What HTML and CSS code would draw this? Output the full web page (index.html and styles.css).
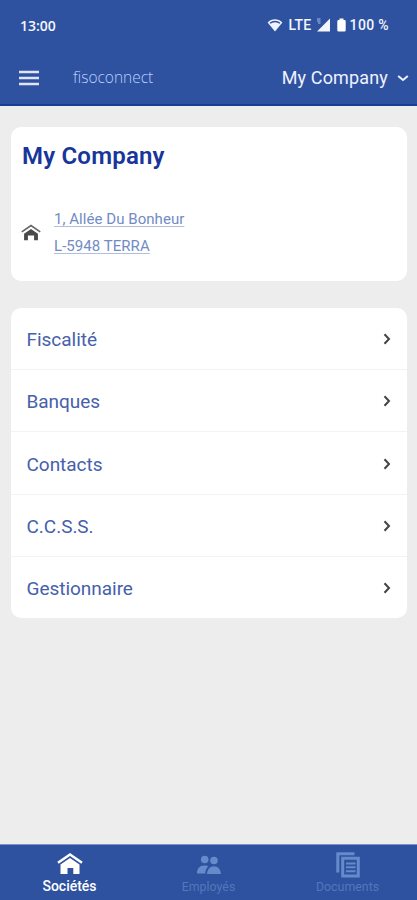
FILE: index.html
```html
<!DOCTYPE html>
<html lang="fr">
<head>
<meta charset="utf-8">
<meta name="viewport" content="width=device-width, initial-scale=1">
<title>fisoconnect</title>
<link rel="stylesheet" href="styles.css">
</head>
<body>
<div class="app">
  <header class="header">
    <div class="status">
      <span class="clock">13:00</span>
      <span class="status-right">
        <svg class="wifi" width="16" height="14" viewBox="0 0 16 14"><path d="M8 13.400 0.600 4.600C4.800 0.200 11.200 0.200 15.400 4.600Z" fill="#eef1ff"/><path d="M3 5.300C5.800 2.900 10.200 2.900 13 5.300" fill="none" stroke="#2e529f" stroke-width="1.300"/></svg>
        <span class="lte">LTE</span>
        <svg class="signal" width="15" height="14" viewBox="0 0 15 14"><path d="M14 0.500V13.500H1Z" fill="#f4f5ff"/><path d="M1 1H4.500M1 3H4.500M2 5H4.500" stroke="#a9b9e5" stroke-width="1.200"/></svg>
        <svg class="battery" width="9" height="14" viewBox="0 0 9 14"><path d="M2.500 0.500H6.500V2H7.500Q8.700 2 8.700 3.200V12.300Q8.700 13.500 7.500 13.500H1.500Q0.300 13.500 0.300 12.300V3.200Q0.300 2 1.500 2H2.500Z" fill="#fff"/></svg>
        <span class="percent">100 %</span>
      </span>
    </div>
    <div class="toolbar">
      <svg class="menu" width="20" height="16" viewBox="0 0 20 16"><path d="M0 2H20M0 8H20M0 14H20" stroke="#dfe4fb" stroke-width="2.600"/></svg>
      <span class="brand">fisoconnect</span>
      <span class="company">My Company</span>
      <svg class="down" width="12" height="8" viewBox="0 0 12 8"><path d="M1.200 2 6 6 10.800 2" fill="none" stroke="#eef1ff" stroke-width="2"/></svg>
    </div>
  </header>
  <main class="content">
    <section class="card">
      <h1 class="title">My Company</h1>
      <div class="address">
        <svg class="home" width="20" height="17" viewBox="0 0 26 21"><path d="M1 9.700 13 1.500 25 9.700" fill="none" stroke="#666" stroke-width="2.200"/><path d="M4 12 13 6 22 12V20.500H17V14.500H9V20.500H4Z" fill="#4a4a4a"/></svg>
        <div class="lines"><a class="line">1, Allée Du Bonheur</a><a class="line">L-5948 TERRA</a></div>
      </div>
    </section>
    <nav class="list">
      <div class="row"><span>Fiscalité</span><svg class="chev" width="8" height="12" viewBox="0 0 8 12"><path d="M1.500 1.200 6 6 1.500 10.800" fill="none" stroke="#444" stroke-width="2"/></svg></div>
      <div class="row"><span>Banques</span><svg class="chev" width="8" height="12" viewBox="0 0 8 12"><path d="M1.500 1.200 6 6 1.500 10.800" fill="none" stroke="#444" stroke-width="2"/></svg></div>
      <div class="row"><span>Contacts</span><svg class="chev" width="8" height="12" viewBox="0 0 8 12"><path d="M1.500 1.200 6 6 1.500 10.800" fill="none" stroke="#444" stroke-width="2"/></svg></div>
      <div class="row"><span>C.C.S.S.</span><svg class="chev" width="8" height="12" viewBox="0 0 8 12"><path d="M1.500 1.200 6 6 1.500 10.800" fill="none" stroke="#444" stroke-width="2"/></svg></div>
      <div class="row"><span>Gestionnaire</span><svg class="chev" width="8" height="12" viewBox="0 0 8 12"><path d="M1.500 1.200 6 6 1.500 10.800" fill="none" stroke="#444" stroke-width="2"/></svg></div>
    </nav>
  </main>
  <footer class="tabs">
    <div class="tab active">
      <svg width="26" height="26" viewBox="0 0 26 26"><path d="M1 10.700 13 2.500 25 10.700" fill="none" stroke="#fff" stroke-width="2.500"/><path d="M3.500 12.500 13 6 22.500 12.500V22H16.300V16H10.500V22H3.500Z" fill="#fff"/></svg>
      <span>Sociétés</span>
    </div>
    <div class="tab">
      <svg width="26" height="26" viewBox="0 0 26 26"><g fill="#648bca"><circle cx="8.700" cy="7.500" r="3.800"/><circle cx="18" cy="8.500" r="3.800"/><path d="M1 21.500C1 16.500 3.500 13.500 8.500 13.500C10 13.500 11.500 13.700 12.500 14.300C10.500 16 9.500 18 9.300 21.500ZM11 22C11.500 17 14 14.200 18 14.200S24.500 17 25 22Z"/></g></svg>
      <span>Employés</span>
    </div>
    <div class="tab">
      <svg width="26" height="26" viewBox="0 0 26 26"><g fill="none" stroke="#648bca"><path d="M2.800 20.500V1.700H19.500" stroke-width="3"/><path d="M7.700 6.300H23.300V24H7.700Z" stroke-width="3"/><path d="M11 11.500H20.500M11 15.300H20.500M11 19.200H20.500" stroke-width="1.900"/></g></svg>
      <span>Documents</span>
    </div>
  </footer>
</div>
</body>
</html>
```
FILE: styles.css
```css
* { box-sizing: border-box; }
body { margin: 0; font-family: Roboto, "Liberation Sans", sans-serif; background: #ededed; }
svg { display: block; flex: none; }
.app { width: 100%; height: 900px; display: flex; flex-direction: column; }
.header { height: 106px; background: #2e529f; border-bottom: 2px solid #173f91; flex: none; }
.status { height: 50px; padding: 0 28px 0 20px; display: flex; align-items: center; justify-content: space-between; color: #f4f6ff; font-weight: 500; font-size: 14px; }
.clock { font-family: "Open Sans", sans-serif; font-weight: 600; font-size: 14px; }
.status-right { display: flex; align-items: center; }
.lte { margin: 0 4px 0 5px; letter-spacing: 0.3px; }
.percent { letter-spacing: 0.35px; }
.battery { margin: 0 4px 0 6px; }
.toolbar { height: 54px; padding: 1px 8px 0 19px; display: flex; align-items: center; }
.brand { margin-left: 34px; font-family: "Open Sans", sans-serif; font-weight: 300; font-size: 15.5px; line-height: 20px; padding-bottom: 2px; color: #bccfff; }
.company { margin-left: auto; font-size: 18px; color: #eef2ff; letter-spacing: 0.15px; }
.down { margin-left: 9px; }
.content { flex: 1; padding: 21px 10px 0 11px; }
.card { height: 154px; background: #fff; border-radius: 10px; padding: 14px 11px 0; }
.title { margin: 0; font-size: 24px; line-height: 30px; font-weight: 600; letter-spacing: 0.2px; color: #17359a; }
.address { margin-top: 35px; display: flex; align-items: center; }
.home { margin: 0 1px 1px -1px; }
.lines { margin-left: 12px; display: flex; flex-direction: column; align-items: flex-start; }
.line { font-size: 15px; line-height: 26.5px; letter-spacing: 0.05px; color: #718bc4; text-decoration: underline; text-decoration-color: #b0bfe0; text-underline-offset: 2px; }
.list { margin-top: 27px; height: 310px; background: #fff; border-radius: 10px; display: flex; flex-direction: column; }
.row { flex: 1; padding: 1px 16px 0 15.5px; display: flex; align-items: center; justify-content: space-between; font-size: 19px; color: #4660aa; }
.row span { padding-top: 1px; letter-spacing: -0.03px; }
.row + .row { border-top: 1px solid #f3f3f3; }
.tabs { height: 56px; flex: none; background: #2e529f; border-top: 1px solid #7c91c3; display: flex; }
.tab { flex: 1; display: flex; flex-direction: column; align-items: center; padding-top: 7px; font-size: 12.4px; line-height: 17px; color: #5078bc; }
.active { color: #fff; font-size: 14px; font-weight: 500; }
```
